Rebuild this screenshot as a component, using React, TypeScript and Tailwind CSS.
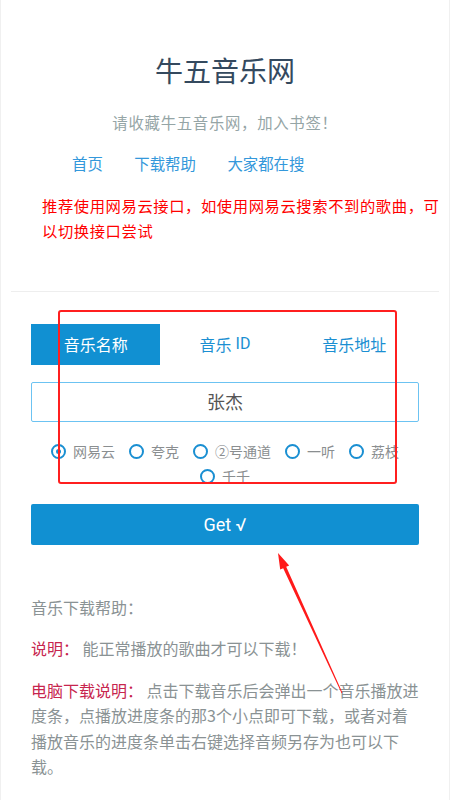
import React from "react";

const radios = ["网易云", "夸克", "②号通道", "一听", "荔枝", "千千"];

export default function App() {
  return (
    <div
      className="relative w-[450px] min-h-[800px] bg-white border-x border-[#f0f0f0] overflow-hidden"
      style={{ fontFamily: '"Noto Sans CJK SC", "Noto Sans", Roboto, sans-serif' }}
    >
      <div className="pt-[50px] h-[90px] text-center text-[28px] leading-[40px] text-[#34495e]">牛五音乐网</div>
      <div className="mt-[20px] h-[24px] text-center text-[15.4px] tracking-[0.7px] leading-[24px] text-[#95a5a6]">
        请收藏牛五音乐网，加入书签！
      </div>
      <div className="mt-[17px] ml-[71px] flex gap-[31.5px] text-[15.4px] leading-[24px] text-[#3498db]">
        <span>首页</span>
        <span>下载帮助</span>
        <span>大家都在搜</span>
      </div>
      <div className="mt-[17.5px] ml-[41px] w-[400px] text-[15.3px] tracking-[0.6px] leading-[25px] text-[#ff0000]">
        推荐使用网易云接口，如使用网易云搜索不到的歌曲，可以切换接口尝试
      </div>
      <div className="mt-[48px] mx-[10px] h-px bg-[#eeeeee]" />

      <div className="mt-[32px] mx-[30px] flex h-[41px] text-[16px]">
        <div className="flex-1 flex items-center justify-center bg-[#1190d2] text-white">音乐名称</div>
        <div className="flex-1 flex items-center justify-center text-[#1b8fd2]">
          音乐 <span className="ml-[4px]" style={{ fontFamily: "Roboto, sans-serif" }}>ID</span>
        </div>
        <div className="flex-1 flex items-center justify-center text-[#1b8fd2]">音乐地址</div>
      </div>

      <div className="mt-[17px] mx-[30px] h-[40px] rounded-[2px] border border-[#6cc3f2] flex items-center justify-center text-[18px] text-[#555555]">
        张杰
      </div>

      <div className="mt-[17.5px] mx-[30px] flex flex-wrap justify-center gap-x-[14px] text-[14px] leading-[25px] text-[#8a8e90]">
        {radios.map((r, i) => (
          <div key={r} className="flex items-center gap-[7px]">
            <span className="w-[15px] h-[15px] rounded-full border-2 border-[#1a8fd2] flex items-center justify-center">
              {i === 0 && <span className="w-[5px] h-[5px] rounded-full bg-[#1a8fd2]" />}
            </span>
            <span>{r}</span>
          </div>
        ))}
      </div>

      <div
        className="mt-[14.5px] mx-[30px] h-[41px] rounded-[2px] bg-[#1190d2] flex items-center justify-center text-white text-[18px]"
        style={{ fontFamily: "Roboto, sans-serif" }}
      >
        Get √
      </div>

      <div className="mt-[50.5px] mx-[30px] text-[16px] leading-[25.3px] text-[#8a9294]">
        <p>音乐下载帮助：</p>
        <p className="mt-[16px]">
          <span className="text-[#c7254e]">说明：</span> 能正常播放的歌曲才可以下载！
        </p>
        <p className="mt-[16.5px]">
          <span className="text-[#c7254e]">电脑下载说明：</span> 点击下载音乐后会弹出一个音乐播放进度条，点播放进度条的那3个小点即可下载，或者对着播放音乐的进度条单击右键选择音频另存为也可以下载。
        </p>
      </div>

      {/* annotation overlay */}
      <div className="absolute left-[57px] top-[310px] w-[339px] h-[174px] border-2 border-[#ff1f1f] rounded-[3px] pointer-events-none" />
      <svg className="absolute left-0 top-0 pointer-events-none" width="450" height="800" viewBox="0 0 450 800">
        <polygon
          points="277,553 288.2,565.4 285.2,566.8 341.4,692.8 340.6,693.2 282.2,568.2 279.2,569.6"
          fill="#ff1a1a"
        />
      </svg>
    </div>
  );
}
